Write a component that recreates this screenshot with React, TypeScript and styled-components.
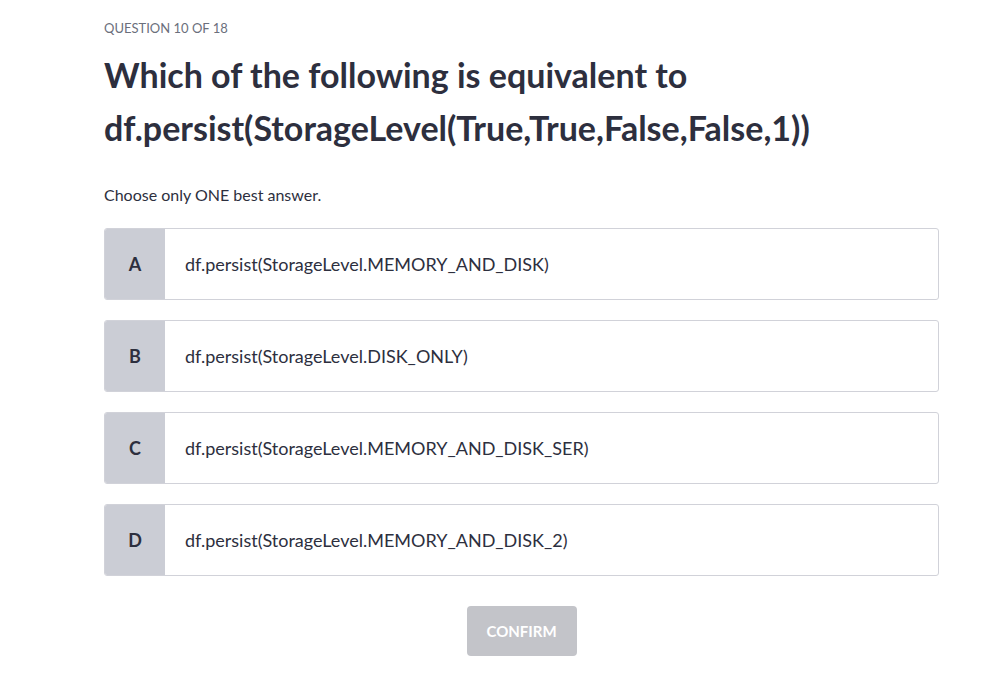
import React, { useState } from "react"
import styled, { createGlobalStyle } from "styled-components"

const GlobalStyle = createGlobalStyle`
  body {
    margin: 0;
    background: #fff;
    font-family: "Lato", "Open Sans", sans-serif;
    color: #2d2f3e;
  }
`

const Page = styled.div`
  width: 835px;
  padding: 18px 0 0 104px;
`

const Counter = styled.div`
  font-size: 13px;
  line-height: 20px;
  color: #6b6f7c;
  text-transform: uppercase;
`

const Title = styled.h1`
  margin: 10px 0 0;
  font-size: 34px;
  line-height: 53px;
  font-weight: 700;
  color: #2d2f3e;
`

const Hint = styled.p`
  margin: 30px 0 0;
  font-size: 16px;
  line-height: 22px;
  color: #2d2f3e;
`

const Options = styled.div`
  margin-top: 22px;
  display: flex;
  flex-direction: column;
  gap: 20px;
`

const Option = styled.button<{ $selected: boolean }>`
  display: flex;
  align-items: stretch;
  height: 72px;
  padding: 0;
  border: 1px solid ${(p) => (p.$selected ? "#5624d0" : "#d1d2d9")};
  border-radius: 3px;
  background: #fff;
  cursor: pointer;
  text-align: left;
  font-family: inherit;
  overflow: hidden;
`

const Letter = styled.span`
  width: 60px;
  flex: none;
  display: flex;
  align-items: center;
  justify-content: center;
  background: #cbcdd5;
  font-size: 18px;
  font-weight: 700;
  color: #2d2f3e;
`

const Answer = styled.span`
  display: flex;
  align-items: center;
  padding-left: 20px;
  font-size: 18px;
  color: #2d2f3e;
`

const Footer = styled.div`
  display: flex;
  justify-content: center;
  margin-top: 30px;
`

const Confirm = styled.button`
  width: 110px;
  height: 50px;
  border: none;
  border-radius: 4px;
  background: #c3c4c9;
  color: #fff;
  font-family: inherit;
  font-size: 15px;
  font-weight: 700;
  cursor: not-allowed;
`

const answers = [
  "df.persist(StorageLevel.MEMORY_AND_DISK)",
  "df.persist(StorageLevel.DISK_ONLY)",
  "df.persist(StorageLevel.MEMORY_AND_DISK_SER)",
  "df.persist(StorageLevel.MEMORY_AND_DISK_2)",
]

const App: React.FC = () => {
  const [selected, setSelected] = useState<number | null>(null)

  return (
    <>
      <GlobalStyle />
      <Page>
        <Counter>Question 10 of 18</Counter>
        <Title>
          Which of the following is equivalent to
          <br />
          df.persist(StorageLevel(True,True,False,False,1))
        </Title>
        <Hint>Choose only ONE best answer.</Hint>
        <Options>
          {answers.map((text, idx) => (
            <Option
              key={idx}
              $selected={selected === idx}
              onClick={() => setSelected(idx)}
            >
              <Letter>{"ABCD"[idx]}</Letter>
              <Answer>{text}</Answer>
            </Option>
          ))}
        </Options>
        <Footer>
          <Confirm disabled={selected === null}>CONFIRM</Confirm>
        </Footer>
      </Page>
    </>
  )
}

export default App
